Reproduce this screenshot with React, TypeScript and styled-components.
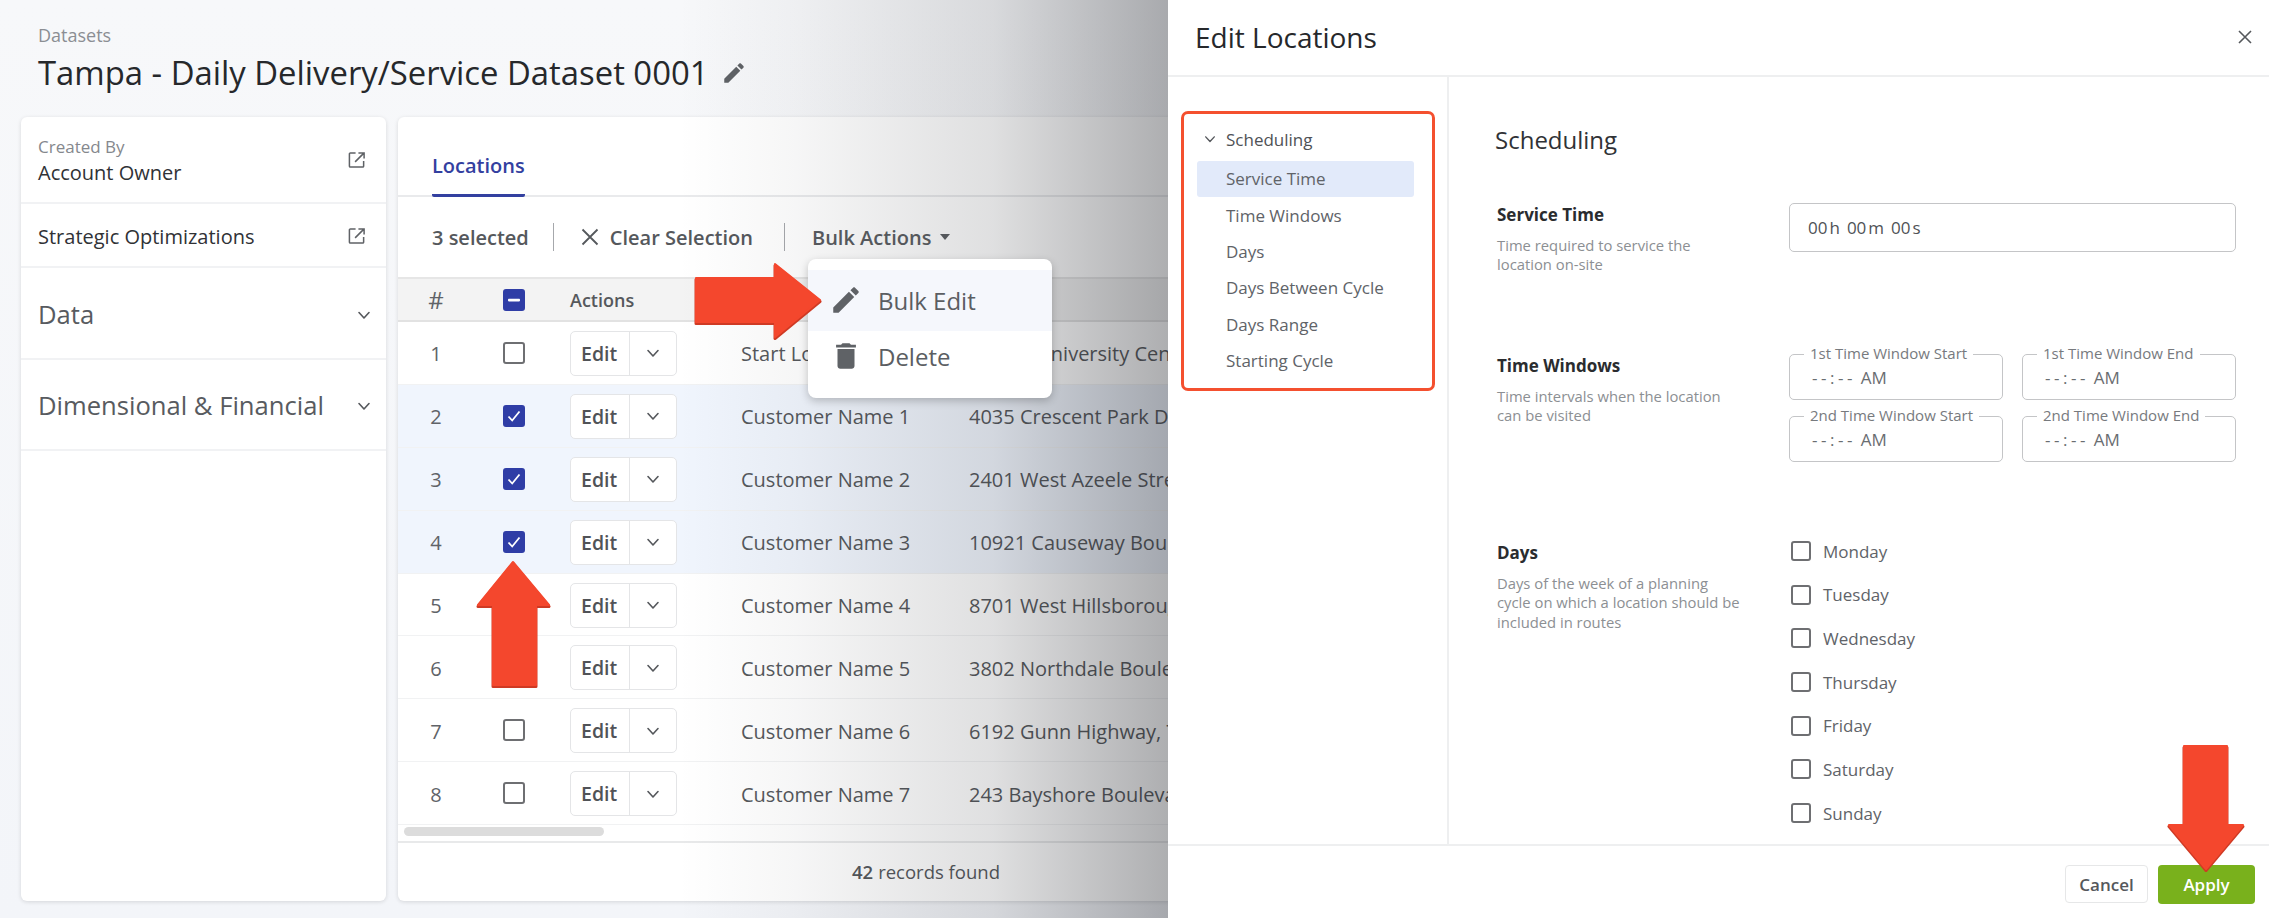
import React from "react";
import styled, { createGlobalStyle } from "styled-components";

const Global = createGlobalStyle`
  html, body { margin: 0; padding: 0; background: #f4f6f9; overflow: hidden; }
  * { box-sizing: border-box; }
  body { font-family: "Open Sans", "Liberation Sans", sans-serif; }
`;

const Page = styled.div`
  position: relative;
  width: 2269px;
  height: 918px;
  display: flex;
  overflow: hidden;
`;

const Main = styled.main`
  position: relative;
  flex: 0 0 1168px;
  height: 918px;
  overflow: hidden;
  background: linear-gradient(180deg, #f7f8fa 0%, #f3f5f9 100%);
  display: flex;
  flex-direction: column;
`;

const Shade = styled.div`
  position: absolute;
  inset: 0;
  z-index: 2;
  pointer-events: none;
  background: linear-gradient(
    90deg,
    rgba(30, 32, 38, 0) 58%,
    rgba(30, 32, 38, 0.04) 68%,
    rgba(30, 32, 38, 0.14) 85%,
    rgba(30, 32, 38, 0.36) 100%
  );
`;

const PageHeader = styled.header`
  height: 117px;
  padding: 22px 0 0 38px;
`;

const Crumb = styled.div`
  font-size: 18px;
  line-height: 26px;
  color: #8b8e93;
`;

const TitleRow = styled.div`
  display: flex;
  align-items: center;
  gap: 13px;
  margin-top: 3px;
`;

const Title = styled.h1`
  margin: 0;
  font-size: 32.85px;
  line-height: 44px;
  font-weight: 400;
  color: #26282b;
  white-space: nowrap;
`;

const Columns = styled.div`
  display: flex;
  gap: 12px;
  padding-left: 21px;
  height: 784px;
`;

const SideCard = styled.aside`
  flex: 0 0 365px;
  background: #fff;
  border-radius: 6px;
  box-shadow: 0 1px 4px rgba(0, 0, 0, 0.13);
`;

const SideItem = styled.div<{ $h: number }>`
  height: ${(p) => p.$h}px;
  display: flex;
  align-items: center;
  justify-content: space-between;
  padding: 3px 15px 0 17px;
  border-bottom: 2px solid #f1f2f4;
`;

const SmallLabel = styled.div`
  font-size: 17px;
  line-height: 24px;
  color: #85888d;
`;

const SideValue = styled.div`
  font-size: 20px;
  line-height: 28px;
  color: #303236;
`;

const SideHeading = styled.div`
  font-size: 25.6px;
  line-height: 32px;
  color: #585b60;
`;

const TableCard = styled.section`
  flex: 0 0 1056px;
  background: #fff;
  border-radius: 6px;
  box-shadow: 0 1px 4px rgba(0, 0, 0, 0.13);
  display: flex;
  flex-direction: column;
`;

const TabBar = styled.div`
  height: 80px;
  display: flex;
  align-items: flex-end;
  padding-left: 34px;
  border-bottom: 2px solid #e9eaec;
`;

const Tab = styled.div`
  height: 63px;
  margin-bottom: -2px;
  padding-top: 2px;
  display: flex;
  align-items: center;
  font-size: 20px;
  font-weight: 600;
  color: #3340a0;
  border-bottom: 3px solid #3340a0;
  border-radius: 0 0 2px 2px;
`;

const Toolbar = styled.div`
  height: 80px;
  display: flex;
  align-items: center;
  padding-left: 34px;
  color: #55585c;
  font-size: 20px;
  font-weight: 600;
`;

const Sep = styled.span`
  width: 1px;
  height: 28px;
  background: #a6a8ac;
  margin: 0 27px 0 24px;
`;

const ClearBtn = styled.div`
  display: flex;
  align-items: center;
  gap: 11px;
  margin-right: 7px;
`;

const BulkWrap = styled.div`
  position: relative;
  z-index: 3;
  display: flex;
  align-items: center;
  gap: 9px;
`;

const Caret = styled.span`
  width: 0;
  height: 0;
  border-left: 5.5px solid transparent;
  border-right: 5.5px solid transparent;
  border-top: 6px solid #55585c;
`;

const Menu = styled.div`
  position: absolute;
  left: -4px;
  top: 35px;
  width: 244px;
  height: 139px;
  padding: 11px 0;
  background: #fff;
  border-radius: 8px;
  box-shadow: 0 3px 8px rgba(0, 0, 0, 0.22);
  font-weight: 400;
`;

const MenuItem = styled.div<{ $active?: boolean; $h: number }>`
  height: ${(p) => p.$h}px;
  padding: ${(p) => (p.$active ? "0" : "0 0 5px")} 21px;
  display: flex;
  align-items: center;
  gap: 15px;
  font-size: 24px;
  color: #5b5e62;
  background: ${(p) => (p.$active ? "#f5f7fc" : "#fff")};
`;

const rowGrid = `
  display: grid;
  grid-template-columns: 76px 80px 187px 228px 485px;
  align-items: center;
`;

const HeadRow = styled.div`
  ${rowGrid}
  height: 45px;
  background: #f3f3f3;
  border-top: 2px solid #e6e6e6;
  border-bottom: 2px solid #e2e2e2;
  color: #55585c;
`;

const Row = styled.div<{ $sel?: boolean }>`
  ${rowGrid}
  height: 62.9px;
  background: ${(p) => (p.$sel ? "#f0f5fd" : "#fff")};
  border-bottom: 1px solid #f1f2f3;
  color: #55585c;
  font-size: 20px;
  white-space: nowrap;
`;

const TextCell = styled.div`
  padding-top: 2px;
`;

const NumCell = styled.div<{ $head?: boolean }>`
  text-align: center;
  padding-top: ${(p) => (p.$head ? 0 : 2)}px;
  font-size: ${(p) => (p.$head ? 24 : 20)}px;
  color: #606368;
`;

const CheckCell = styled.div`
  display: flex;
  justify-content: center;
`;

const ActionsCell = styled.div`
  padding-left: 16px;
`;

const HeadLabel = styled.span`
  font-size: 18px;
  font-weight: 600;
  color: #55585c;
`;

const Box = styled.span<{ $on?: boolean; $size?: number }>`
  width: ${(p) => p.$size ?? 22}px;
  height: ${(p) => p.$size ?? 22}px;
  flex: none;
  border-radius: 3px;
  display: inline-flex;
  align-items: center;
  justify-content: center;
  background: ${(p) => (p.$on ? "#2f3da6" : "#fff")};
  border: 2px solid ${(p) => (p.$on ? "#2f3da6" : "#6e6f72")};
`;

const EditGroup = styled.div`
  width: 107px;
  height: 45px;
  margin-top: 1px;
  display: flex;
  background: #fff;
  border: 1.5px solid #e4e5e7;
  border-radius: 5px;
`;

const EditText = styled.div`
  width: 59px;
  display: flex;
  align-items: center;
  padding-left: 10px;
  font-size: 19.5px;
  font-weight: 600;
  color: #505357;
  border-right: 1.5px solid #e4e5e7;
`;

const EditChevron = styled.div`
  flex: 1;
  display: flex;
  align-items: center;
  justify-content: center;
`;

const Scrollbar = styled.div`
  width: 200px;
  height: 9px;
  margin: 2px 0 5px 6px;
  background: #dcdcdc;
  border-radius: 5px;
`;

const TableFoot = styled.div`
  height: 59px;
  border-top: 2px solid #e8e9ea;
  display: flex;
  align-items: center;
  justify-content: center;
  font-size: 18.5px;
  color: #55585c;
  b { font-weight: 600; margin-right: 5px; }
`;

const Overlay = styled.svg`
  position: absolute;
  z-index: 5;
  pointer-events: none;
`;

const ExternalSlot = styled.span`
  display: inline-flex;
  margin: -2px 5px 0 0;
`;

const Drawer = styled.aside`
  flex: 0 0 1101px;
  height: 918px;
  background: #fff;
  display: flex;
  flex-direction: column;
`;

const DrawerHead = styled.header`
  height: 77px;
  flex: none;
  display: flex;
  align-items: center;
  justify-content: space-between;
  padding: 0 16px 1px 27px;
  border-bottom: 2px solid #eeeff0;
`;

const DrawerTitle = styled.h2`
  margin: 0;
  font-size: 28px;
  font-weight: 400;
  color: #26282b;
`;

const DrawerBody = styled.div`
  flex: 1;
  display: flex;
  min-height: 0;
`;

const NavCol = styled.nav`
  flex: 0 0 281px;
  padding: 34px 0 0 13px;
  border-right: 2px solid #eeeff0;
`;

const NavBox = styled.div`
  width: 254px;
  height: 280px;
  border: 3px solid #f4502f;
  border-radius: 7px;
  padding: 7px 18px 0 13px;
`;

const NavGroup = styled.div`
  height: 36px;
  margin-bottom: 4px;
  display: flex;
  align-items: center;
  gap: 10px;
  padding-left: 7px;
  font-size: 17px;
  color: #4f5256;
`;

const NavItem = styled.div<{ $active?: boolean }>`
  height: 36.4px;
  display: flex;
  align-items: center;
  padding: 0 0 1px 29px;
  font-size: 17px;
  border-radius: 3px;
  color: #606368;
  background: ${(p) => (p.$active ? "#e2eafa" : "transparent")};
`;

const Content = styled.div`
  flex: 1;
  padding: 47px 33px 0 46px;
  overflow: hidden;
`;

const SectionTitle = styled.h3`
  margin: 0 0 47px;
  font-size: 24px;
  line-height: 32px;
  font-weight: 400;
  color: #303236;
`;

const Section = styled.div<{ $h?: number }>`
  display: grid;
  grid-template-columns: 292px 447px;
  padding-left: 2px;
  height: ${(p) => (p.$h ? `${p.$h}px` : "auto")};
`;

const FieldLabel = styled.div`
  font-size: 17px;
  line-height: 24px;
  font-weight: 700;
  color: #2a2c2f;
  margin-bottom: 9px;
`;

const FieldHelp = styled.div`
  width: 243px;
  font-size: 14.8px;
  line-height: 19.4px;
  color: #8c8f93;
`;

const DurationInput = styled.div`
  height: 49px;
  border: 1.5px solid #c4c5c7;
  border-radius: 5px;
  display: flex;
  align-items: center;
  padding-left: 18px;
  font-size: 17px;
  color: #4f5256;
  word-spacing: 1px;
  i { font-style: normal; margin: 0 7px 0 2px; }
`;

const TimeGrid = styled.div`
  display: grid;
  grid-template-columns: 214px 214px;
  grid-auto-rows: 46px;
  column-gap: 19px;
  row-gap: 16px;
`;

const TimeBox = styled.div`
  position: relative;
  border: 1.5px solid #c4c5c7;
  border-radius: 5px;
  display: flex;
  align-items: center;
  gap: 5px;
  padding: 0 0 0 22px;
  font-size: 17px;
  color: #6a6d71;
`;

const TimeDigits = styled.span`
  letter-spacing: 3.5px;
`;

const Legend = styled.span`
  position: absolute;
  left: 14px;
  top: -12px;
  padding: 0 6px;
  background: #fff;
  font-size: 15px;
  line-height: 20px;
  color: #777a7e;
  white-space: nowrap;
`;

const DayList = styled.div`
  display: flex;
  flex-direction: column;
  gap: 23.7px;
  padding-left: 2px;
`;

const DayRow = styled.label`
  height: 20px;
  display: flex;
  align-items: center;
  gap: 12px;
  font-size: 17px;
  color: #606368;
`;

const DrawerFoot = styled.footer`
  height: 74px;
  flex: none;
  border-top: 2px solid #eeeff0;
  display: flex;
  justify-content: flex-end;
  gap: 10px;
  padding: 19px 14px 0 0;
`;

const CancelBtn = styled.button`
  width: 83px;
  height: 38px;
  background: #fff;
  border: 1.5px solid #e6e7e8;
  border-radius: 4px;
  font: 600 17px "Open Sans", sans-serif;
  color: #55585c;
`;

const ApplyBtn = styled.button`
  width: 97px;
  height: 39px;
  background: #79b11c;
  border: 0;
  border-radius: 4px;
  font: 600 17px "Open Sans", sans-serif;
  color: #fff;
`;

const Chevron = ({ size = 14, color = "#55585c", w = 1.6 }: { size?: number; color?: string; w?: number }) => (
  <svg width={size} height={size} viewBox="0 0 14 14" fill="none">
    <path d="M2 4.500 7 10l5-5.500" stroke={color} strokeWidth={w} strokeLinecap="round" strokeLinejoin="round" />
  </svg>
);

const ExternalIcon = () => (
  <ExternalSlot>
    <svg width="18" height="18" viewBox="0 0 19 19" fill="none" stroke="#5f6266" strokeWidth="1.600">
      <path d="M8 2H2.500A1 1 0 0 0 1.500 3v13a1 1 0 0 0 1 1h13a1 1 0 0 0 1-1v-5.500" />
      <path d="M11 2h6v6M17 2 7.500 11.500" />
    </svg>
  </ExternalSlot>
);

const PencilIcon = ({ size, color }: { size: number; color: string }) => (
  <svg width={size} height={size} viewBox="0 0 24 24" fill={color}>
    <path d="M3 17.250V21h3.750L17.810 9.940l-3.750-3.750L3 17.250zM20.710 7.040c.39-.39.39-1.020 0-1.410l-2.340-2.340c-.39-.39-1.020-.39-1.410 0l-1.830 1.830 3.750 3.750 1.830-1.830z" />
  </svg>
);

const TrashIcon = () => (
  <svg width="34" height="34" viewBox="0 0 24 24" fill="#5f6266">
    <path d="M6 19c0 1.100.9 2 2 2h8c1.100 0 2-.9 2-2V7H6v12zM19 4h-3.500l-1-1h-5l-1 1H5v2h14V4z" />
  </svg>
);

const CheckMark = () => (
  <svg width="16" height="16" viewBox="0 0 16 16" fill="none">
    <path d="M2.500 8.500 6.200 12.500 13.500 3.500" stroke="#fff" strokeWidth="1.800" />
  </svg>
);

const MinusMark = () => (
  <svg width="14" height="14" viewBox="0 0 14 14">
    <rect x="1" y="5.800" width="12" height="2.600" rx="0.800" fill="#fff" />
  </svg>
);

const rows = [
  { n: 1, name: "Start Location", addr: "4202 E University Center Drive", sel: false },
  { n: 2, name: "Customer Name 1", addr: "4035 Crescent Park Drive, Riverview", sel: true },
  { n: 3, name: "Customer Name 2", addr: "2401 West Azeele Street, Tampa", sel: true },
  { n: 4, name: "Customer Name 3", addr: "10921 Causeway Boulevard, Brandon", sel: true },
  { n: 5, name: "Customer Name 4", addr: "8701 West Hillsborough Avenue", sel: false },
  { n: 6, name: "Customer Name 5", addr: "3802 Northdale Boulevard, Tampa", sel: false },
  { n: 7, name: "Customer Name 6", addr: "6192 Gunn Highway, Tampa", sel: false },
  { n: 8, name: "Customer Name 7", addr: "243 Bayshore Boulevard, Tampa", sel: false },
];

const navItems = ["Service Time", "Time Windows", "Days", "Days Between Cycle", "Days Range", "Starting Cycle"];
const windows = ["1st Time Window Start", "1st Time Window End", "2nd Time Window Start", "2nd Time Window End"];
const days = ["Monday", "Tuesday", "Wednesday", "Thursday", "Friday", "Saturday", "Sunday"];

export default function App() {
  return (
    <Page>
      <Global />
      <Main>
        <PageHeader>
          <Crumb>Datasets</Crumb>
          <TitleRow>
            <Title>Tampa - Daily Delivery/Service Dataset 0001</Title>
            <PencilIcon size={26} color="#5f6266" />
          </TitleRow>
        </PageHeader>
        <Columns>
          <SideCard>
            <SideItem $h={87}>
              <div>
                <SmallLabel>Created By</SmallLabel>
                <SideValue>Account Owner</SideValue>
              </div>
              <ExternalIcon />
            </SideItem>
            <SideItem $h={64}>
              <SideValue>Strategic Optimizations</SideValue>
              <ExternalIcon />
            </SideItem>
            <SideItem $h={92}>
              <SideHeading>Data</SideHeading>
              <Chevron />
            </SideItem>
            <SideItem $h={91}>
              <SideHeading>Dimensional &amp; Financial</SideHeading>
              <Chevron />
            </SideItem>
          </SideCard>
          <TableCard>
            <TabBar>
              <Tab>Locations</Tab>
            </TabBar>
            <Toolbar>
              <span>3 selected</span>
              <Sep />
              <ClearBtn>
                <svg width="18" height="18" viewBox="0 0 18 18" fill="none" stroke="#55585c" strokeWidth="1.800">
                  <path d="M1.500 1.500 16.500 16.500M16.500 1.500 1.500 16.500" />
                </svg>
                Clear Selection
              </ClearBtn>
              <Sep />
              <BulkWrap>
                Bulk Actions
                <Caret />
                <Menu>
                  <MenuItem $active $h={61}>
                    <PencilIcon size={34} color="#5f6266" />
                    Bulk Edit
                  </MenuItem>
                  <MenuItem $h={56}>
                    <TrashIcon />
                    Delete
                  </MenuItem>
                </Menu>
              </BulkWrap>
            </Toolbar>
            <HeadRow>
              <NumCell $head>#</NumCell>
              <CheckCell>
                <Box $on>
                  <MinusMark />
                </Box>
              </CheckCell>
              <ActionsCell>
                <HeadLabel>Actions</HeadLabel>
              </ActionsCell>
            </HeadRow>
            {rows.map((r) => (
              <Row key={r.n} $sel={r.sel}>
                <NumCell>{r.n}</NumCell>
                <CheckCell>
                  <Box $on={r.sel}>{r.sel && <CheckMark />}</Box>
                </CheckCell>
                <ActionsCell>
                  <EditGroup>
                    <EditText>Edit</EditText>
                    <EditChevron>
                      <Chevron />
                    </EditChevron>
                  </EditGroup>
                </ActionsCell>
                <TextCell>{r.name}</TextCell>
                <TextCell>{r.addr}</TextCell>
              </Row>
            ))}
            <Scrollbar />
            <TableFoot>
              <b>42</b> records found
            </TableFoot>
          </TableCard>
        </Columns>
        <Shade />
      </Main>

      <Drawer>
        <DrawerHead>
          <DrawerTitle>Edit Locations</DrawerTitle>
          <svg width="16" height="16" viewBox="0 0 16 16" fill="none" stroke="#55585c" strokeWidth="1.600">
            <path d="M2 2 14 14M14 2 2 14" />
          </svg>
        </DrawerHead>
        <DrawerBody>
          <NavCol>
            <NavBox>
              <NavGroup>
                <Chevron size={12} />
                Scheduling
              </NavGroup>
              {navItems.map((n, i) => (
                <NavItem key={n} $active={i === 0}>
                  {n}
                </NavItem>
              ))}
            </NavBox>
          </NavCol>
          <Content>
            <SectionTitle>Scheduling</SectionTitle>
            <Section $h={151}>
              <div>
                <FieldLabel>Service Time</FieldLabel>
                <FieldHelp>Time required to service the location on-site</FieldHelp>
              </div>
              <DurationInput>
                00<i>h</i>00<i>m</i>00<i>s</i>
              </DurationInput>
            </Section>
            <Section $h={187}>
              <div>
                <FieldLabel>Time Windows</FieldLabel>
                <FieldHelp>Time intervals when the location can be visited</FieldHelp>
              </div>
              <TimeGrid>
                {windows.map((w) => (
                  <TimeBox key={w}>
                    <Legend>{w}</Legend>
                    <TimeDigits>--:--</TimeDigits> AM
                  </TimeBox>
                ))}
              </TimeGrid>
            </Section>
            <Section>
              <div>
                <FieldLabel>Days</FieldLabel>
                <FieldHelp>Days of the week of a planning cycle on which a location should be included in routes</FieldHelp>
              </div>
              <DayList>
                {days.map((d) => (
                  <DayRow key={d}>
                    <Box $size={20} />
                    {d}
                  </DayRow>
                ))}
              </DayList>
            </Section>
          </Content>
        </DrawerBody>
        <DrawerFoot>
          <CancelBtn>Cancel</CancelBtn>
          <ApplyBtn>Apply</ApplyBtn>
        </DrawerFoot>
      </Drawer>

      <Overlay style={{ left: 690, top: 258 }} width="136" height="84" viewBox="0 0 136 84">
        <path d="M6 20H85V6L130 42 85 79V64H6Z" transform="translate(0 1.500)" fill="#cf3a24" stroke="#cf3a24" strokeWidth="3" strokeLinejoin="round" />
        <path d="M6 20H85V6L130 42 85 79V64H6Z" fill="#f4472d" stroke="#f4472d" strokeWidth="2" strokeLinejoin="round" />
      </Overlay>
      <Overlay style={{ left: 472, top: 556 }} width="84" height="134" viewBox="0 0 84 134">
        <path d="M21 49H6L41 6 77 49H64V129H21Z" transform="translate(0 1.500)" fill="#cf3a24" stroke="#cf3a24" strokeWidth="3" strokeLinejoin="round" />
        <path d="M21 49H6L41 6 77 49H64V129H21Z" fill="#f4472d" stroke="#f4472d" strokeWidth="2" strokeLinejoin="round" />
      </Overlay>
      <Overlay style={{ left: 2163, top: 740 }} width="86" height="134" viewBox="0 0 86 134">
        <path d="M21 6H64V85H80L43 129 6 85H21Z" transform="translate(0 1.500)" fill="#cf3a24" stroke="#cf3a24" strokeWidth="3" strokeLinejoin="round" />
        <path d="M21 6H64V85H80L43 129 6 85H21Z" fill="#f4472d" stroke="#f4472d" strokeWidth="2" strokeLinejoin="round" />
      </Overlay>
    </Page>
  );
}
